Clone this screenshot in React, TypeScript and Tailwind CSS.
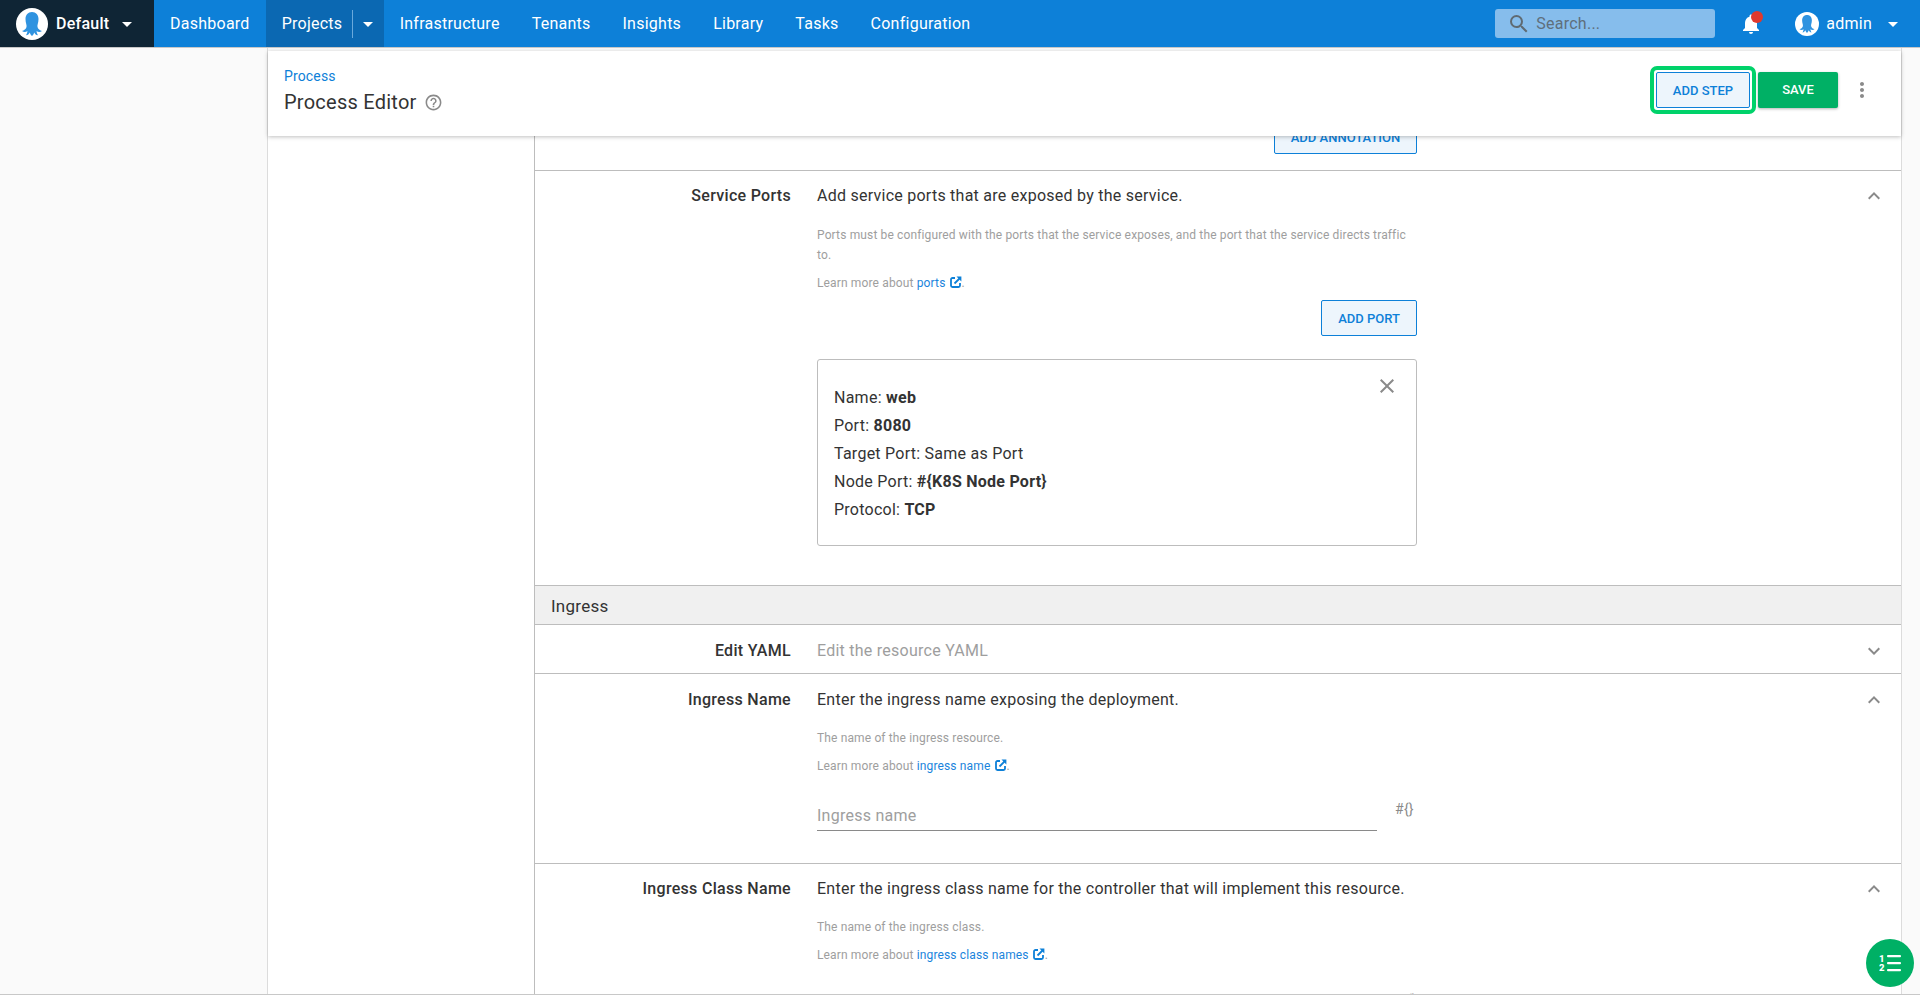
import React from 'react';
import { MdArrowDropDown, MdClose, MdExpandLess, MdExpandMore, MdHelpOutline, MdMoreVert, MdNotifications, MdSearch } from 'react-icons/md';

const OctoLogo: React.FC<{ size: number }> = ({ size }) => (
    <svg width={size} height={size} viewBox="0 0 32 32" className="shrink-0">
        <circle cx="16" cy="16" r="16" fill="#ffffff" />
        <path
            d="M16 4C12 4 9.500 7 9.500 11C9.500 15 11 17 10.500 19C10 21 8 22.500 6 23C7.800 24.400 10 24.200 11.400 23C11.300 24.800 10.800 26 10 27.200C11.900 27.200 13 25.800 13.800 24.400C14.200 25.800 14.800 27 16 28C17.200 27 17.800 25.800 18.200 24.400C19 25.800 20.100 27.200 22 27.200C21.200 26 20.700 24.800 20.600 23C22 24.200 24.200 24.400 26 23C24 22.500 22 21 21.500 19C21 17 22.500 15 22.500 11C22.500 7 20 4 16 4Z"
            fill="#2f93e0"
        />
    </svg>
);

// external link badge used after the "learn more" links
const ExternalIcon: React.FC = () => (
    <svg width="12" height="12" viewBox="0 0 12 12" className="ml-[1px] inline align-[-1px]" fill="none" stroke="#0d80d8">
        <path d="M5 2H2.500C1.700 2 1 2.700 1 3.500V9.500C1 10.300 1.700 11 2.500 11H8.500C9.300 11 10 10.300 10 9.500V7" strokeWidth="1.800" />
        <path d="M4.500 7.500L10 2" strokeWidth="1.800" />
        <path d="M6.500 0.600H11.400V5.500Z" fill="#0d80d8" stroke="none" />
    </svg>
);

const StepsIcon: React.FC = () => (
    <svg width="22" height="18" viewBox="0 0 22 18" fill="#ffffff">
        <text x="0" y="8" fontSize="9.500" fontWeight="900" fontFamily="Roboto, sans-serif">1</text>
        <text x="0" y="17" fontSize="9.500" fontWeight="900" fontFamily="Roboto, sans-serif">2</text>
        <rect x="8" y="1" width="14" height="2.200" rx="1" />
        <rect x="8" y="8" width="14" height="2.200" rx="1" />
        <rect x="8" y="15" width="14" height="2.200" rx="1" />
    </svg>
);

const navItems = ['Infrastructure', 'Tenants', 'Insights', 'Library', 'Tasks', 'Configuration'];

const TopNav: React.FC = () => (
    <nav className="flex h-12 shrink-0 items-stretch border-b border-[#c8c8c8] bg-[#0d80d8] text-base text-white">
        <div className="flex w-[154px] items-center bg-[#0f2535] pl-4">
            <OctoLogo size={32} />
            <span className="ml-[8px] font-medium">Default</span>
            <MdArrowDropDown className="ml-[6px] text-2xl" />
        </div>
        <a className="flex items-center px-4">Dashboard</a>
        <div className="flex w-[118px] items-center bg-[#0b68b2] pl-4">
            <span>Projects</span>
            <span className="ml-[10px] h-[28px] w-px bg-[#6aa9dc]" />
            <MdArrowDropDown className="ml-[3px] text-2xl" />
        </div>
        {navItems.map((item) => (
            <a key={item} className="flex items-center px-4">{item}</a>
        ))}
        <div className="ml-auto flex items-center">
            <div className="flex h-[29px] w-[220px] items-center rounded-[3px] bg-[#86bdec] pl-[12px] text-[#5f6f7c]">
                <MdSearch className="text-[24px] text-[#5f6a72]" />
                <span className="ml-[5px]">Search...</span>
            </div>
            <div className="relative ml-[24px] h-[24px] w-[24px]">
                <MdNotifications className="text-[24px]" />
                <span className="absolute top-[-1px] right-0 h-[12px] w-[12px] rounded-full bg-[#e0392e]" />
            </div>
            <div className="ml-[32px]"><OctoLogo size={24} /></div>
            <span className="ml-[7px]">admin</span>
            <MdArrowDropDown className="ml-[9px] mr-[15px] text-2xl" />
        </div>
    </nav>
);

const OutlineButton: React.FC<{ label: string; className?: string }> = ({ label, className }) => (
    <button className={`h-[36px] whitespace-nowrap rounded-[2px] border border-[#0d80d8] bg-[#edf5fc] text-[13px] font-medium tracking-normal text-[#0d80d8] ${className || ''}`}>
        {label}
    </button>
);

const Row: React.FC<{ label: string; title: string; open?: boolean; muted?: boolean; children?: React.ReactNode; className?: string }> = ({ label, title, open, muted, children, className }) => (
    <div className={`flex border-b border-[#bdbdbd] bg-white ${className || ''}`}>
        <div className="w-[256px] shrink-0 text-right text-base leading-6 font-medium tracking-[0.3px] text-[#333333]">{label}</div>
        <div className="ml-[26px] w-[600px] shrink-0">
            <div className={`text-base leading-6 ${muted ? 'text-[#9e9e9e]' : 'text-[#333333]'}`}>{title}</div>
            {children}
        </div>
        <div className="ml-auto mr-[15px]">
            {open ? <MdExpandLess className="text-2xl text-[#8a8a8a]" /> : <MdExpandMore className="text-2xl text-[#8a8a8a]" />}
        </div>
    </div>
);

const Help: React.FC<{ children: React.ReactNode; className?: string }> = ({ children, className }) => (
    <p className={`text-xs leading-5 tracking-[0.14px] text-[#9e9e9e] ${className || ''}`}>{children}</p>
);

const LearnMore: React.FC<{ link: string; className?: string }> = ({ link, className }) => (
    <Help className={className}>
        Learn more about <a className="text-[#1a84dc]">{link}</a>{' '}
        <ExternalIcon />.
    </Help>
);

const PortLine: React.FC<{ name: string; value: string; plain?: boolean }> = ({ name, value, plain }) => (
    <div className="text-base leading-7 text-[#333333]">
        {name}: {plain ? value : <b className="font-bold">{value}</b>}
    </div>
);

const App: React.FC = () => {
    return (
        <div className="relative flex h-[995px] flex-col overflow-hidden bg-[#fafafa] font-['Roboto',sans-serif] tracking-[0.25px]">
            <TopNav />
            <div className="flex min-h-0 flex-1 border-b border-[#c8c8c8]">
                <div className="w-[267px] shrink-0" />
                <main className="flex w-[1635px] shrink-0 flex-col border-r border-l border-[#dcdcdc] pt-[3px]">
                    <header className="relative z-10 flex h-[85px] shrink-0 items-start justify-between bg-white pl-[16px] shadow-[0_1px_4px_rgba(0,0,0,0.25)]">
                        <div>
                            <a className="mt-[15px] block text-sm leading-5 tracking-[0.15px] text-[#0d80d8]">Process</a>
                            <h1 className="mt-[2px] flex items-center text-xl leading-7 text-[#333333]">
                                Process Editor
                                <MdHelpOutline className="ml-[7px] text-[19px] text-[#8a8a8a]" />
                            </h1>
                        </div>
                        <div className="mt-[15px] flex items-center pr-[27px]">
                            <div className="rounded-[7px] border-[4px] border-[#00d26a] p-[2px]">
                                <OutlineButton label="ADD STEP" className="block w-[94px] pt-[2px]" />
                            </div>
                            <button className="ml-[2px] h-[36px] w-[80px] rounded-[2px] bg-[#00b065] text-[13px] font-medium tracking-normal text-white shadow-[0_1px_3px_rgba(0,0,0,0.3)]">SAVE</button>
                            <MdMoreVert className="ml-[12px] text-2xl text-[#8a8a8a]" />
                        </div>
                    </header>
                    <div className="flex min-h-0 flex-1 overflow-hidden">
                        <div className="w-[267px] shrink-0 border-r border-[#bdbdbd] bg-white" />
                        <div className="min-w-0 flex-1 bg-white">
                            <div className="flex h-[35px] justify-start border-b border-[#bdbdbd]">
                                <div className="-mt-[18px] ml-[739px]">
                                    <OutlineButton label="ADD ANNOTATION" className="w-[143px] pt-[4px]" />
                                </div>
                            </div>
                            <Row label="Service Ports" title="Add service ports that are exposed by the service." open className="h-[415px] pt-[13px]">
                                <Help className="mt-[17px]">Ports must be configured with the ports that the service exposes, and the port that the service directs traffic to.</Help>
                                <LearnMore link="ports" className="mt-[8px]" />
                                <div className="mt-[7px] flex justify-end">
                                    <OutlineButton label="ADD PORT" className="w-[96px] pt-[2px]" />
                                </div>
                                <div className="relative mt-[23px] h-[187px] rounded-[3px] border border-[#bdbdbd] px-[16px] pt-[24px]">
                                    <button className="absolute top-[14px] right-[17px] text-2xl text-[#8a8a8a]"><MdClose /></button>
                                    <PortLine name="Name" value="web" />
                                    <PortLine name="Port" value="8080" />
                                    <PortLine name="Target Port" value="Same as Port" plain />
                                    <PortLine name="Node Port" value="#{K8S Node Port}" />
                                    <PortLine name="Protocol" value="TCP" />
                                </div>
                            </Row>
                            <div className="flex h-[39px] items-center border-b border-[#bdbdbd] bg-[#f0f0f0] pt-[4px] pl-[16px] text-[17px] text-[#333333]">Ingress</div>
                            <Row label="Edit YAML" title="Edit the resource YAML" muted className="h-[49px] pt-[14px]" />
                            <Row label="Ingress Name" title="Enter the ingress name exposing the deployment." open className="h-[190px] pt-[14px]">
                                <Help className="mt-[16px]">The name of the ingress resource.</Help>
                                <LearnMore link="ingress name" className="mt-[8px]" />
                                <div className="mt-[21px] flex items-start">
                                    <div className="h-[34px] w-[560px] border-b border-[#8a8a8a] pt-[3px] text-base leading-8 text-[#9e9e9e]">Ingress name</div>
                                    <span className="mt-[2px] ml-[18px] text-sm leading-5 text-[#8a8a8a]">#{'{}'}</span>
                                </div>
                            </Row>
                            <Row label="Ingress Class Name" title="Enter the ingress class name for the controller that will implement this resource." open className="h-[200px] border-b-0 pt-[13px]">
                                <Help className="mt-[16px]">The name of the ingress class.</Help>
                                <LearnMore link="ingress class names" className="mt-[8px]" />
                                <div className="mt-[22px] flex justify-end">
                                    <span className="mt-[3px] text-sm leading-5 text-[#8a8a8a]">#{'{}'}</span>
                                </div>
                            </Row>
                        </div>
                    </div>
                </main>
            </div>
            <button className="absolute top-[939px] left-[1866px] z-20 flex h-[48px] w-[48px] items-center justify-center rounded-full bg-[#00b065]">
                <StepsIcon />
            </button>
        </div>
    );
};

export default App;
